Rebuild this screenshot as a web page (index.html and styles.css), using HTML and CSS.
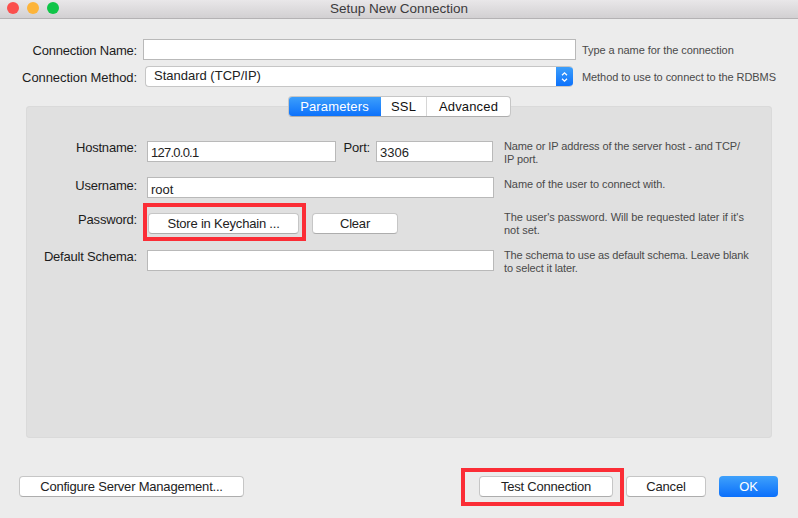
FILE: index.html
```html
<!DOCTYPE html>
<html lang="en">
<head>
    <meta charset="UTF-8">
    <meta name="viewport" content="width=device-width, initial-scale=1.0">
    <title>Setup New Connection</title>
    <link rel="stylesheet" href="styles.css">
</head>
<body>
    <div class="window">
        <div class="titlebar">
            <div class="lights">
                <span class="light red"></span>
                <span class="light yellow"></span>
                <span class="light green"></span>
            </div>
            <div class="title">Setup New Connection</div>
        </div>

        <div class="top-form">
            <div class="top-row">
                <label class="top-label">Connection Name:</label>
                <div class="input name-input"></div>
                <div class="hint">Type a name for the connection</div>
            </div>
            <div class="top-row">
                <label class="top-label method-label">Connection Method:</label>
                <div class="select">
                    <span class="select-text">Standard (TCP/IP)</span>
                    <span class="stepper">
                        <svg width="9" height="14" viewBox="0 0 9 14">
                            <path d="M2 5.2 4.5 2.8 7 5.2M2 8.8 4.5 11.2 7 8.8" fill="none" stroke="#fff" stroke-width="1.3"/>
                        </svg>
                    </span>
                </div>
                <div class="hint">Method to use to connect to the RDBMS</div>
            </div>
        </div>

        <div class="panel-wrap">
            <div class="tabs">
                <div class="tab tab-active">Parameters</div>
                <div class="tab tab-ssl">SSL</div>
                <div class="tab tab-advanced">Advanced</div>
            </div>
            <div class="panel">
                <div class="form-grid">
                    <label class="field-label">Hostname:</label>
                    <div class="field host-field">
                        <div class="input host-input"><span class="host-value">127.0.0.1</span></div>
                        <label class="field-label port-label">Port:</label>
                        <div class="input port-input">3306</div>
                    </div>
                    <div class="hint host-hint">Name or IP address of the server host - and TCP/<br>IP port.</div>

                    <label class="field-label user-label">Username:</label>
                    <div class="field">
                        <div class="input wide-input">root</div>
                    </div>
                    <div class="hint user-hint">Name of the user to connect with.</div>

                    <label class="field-label">Password:</label>
                    <div class="field button-field">
                        <div class="btn store-btn">Store in Keychain ...<span class="callout callout-store"></span></div>
                        <div class="btn clear-btn">Clear</div>
                    </div>
                    <div class="hint password-hint">The user's password. Will be requested later if it's<br>not set.</div>

                    <label class="field-label">Default Schema:</label>
                    <div class="field">
                        <div class="input wide-input"></div>
                    </div>
                    <div class="hint schema-hint">The schema to use as default schema. Leave blank<br>to select it later.</div>
                </div>
            </div>
        </div>

        <div class="footer">
            <div class="btn manage-btn">Configure Server Management...</div>
            <div class="footer-right">
                <div class="btn test-btn">Test Connection<span class="callout callout-test"></span></div>
                <div class="btn cancel-btn">Cancel</div>
                <div class="btn ok-btn">OK</div>
            </div>
        </div>
    </div>
</body>
</html>
```

FILE: styles.css
```css
* {
    box-sizing: border-box;
}
html, body {
    margin: 0;
    height: 100%;
}
body {
    font-family: "Liberation Sans", Arial, sans-serif;
    font-size: 13px;
    letter-spacing: -0.2px;
    color: #222;
    background: #ececec;
    overflow: hidden;
}
.window {
    height: 518px;
    display: flex;
    flex-direction: column;
}
.titlebar {
    height: 19px;
    display: flex;
    align-items: center;
    justify-content: center;
    position: relative;
    background: linear-gradient(#e9e7e9, #d2d0d2);
    border-bottom: 1px solid #b4b2b4;
}
.lights {
    position: absolute;
    left: 7px;
    top: 2px;
    display: flex;
    gap: 8px;
}
.light {
    width: 12px;
    height: 12px;
    border-radius: 50%;
}
.red { background: #fb4f4d; }
.yellow { background: #fdb43a; }
.green { background: #0fc548; }
.title {
    color: #3c3a3c;
    font-size: 13.5px;
    letter-spacing: 0;
    line-height: 17px;
    margin-top: -1px;
}

.top-form {
    padding-top: 20px;
    display: flex;
    flex-direction: column;
    gap: 6px;
}
.top-row {
    display: flex;
    align-items: center;
    height: 21px;
}
.top-label {
    width: 137px;
    padding-top: 2px;
    text-align: right;
    color: #1c1c1c;
}
.method-label {
    letter-spacing: -0.08px;
}
.name-input {
    margin-left: 6px;
    width: 433px;
}
.input {
    height: 21px;
    background: #fff;
    border: 1px solid #b9b9b9;
    padding: 3px 3px 0;
    line-height: 17px;
    letter-spacing: 0;
    color: #222;
}
.hint {
    font-size: 11px;
    line-height: 13px;
    letter-spacing: -0.08px;
    white-space: nowrap;
    color: #4a4a4a;
}
.top-row .hint {
    margin-left: 6px;
    padding-top: 2px;
}
.select {
    margin-left: 8px;
    width: 428px;
    height: 21px;
    display: flex;
    background: #fff;
    border: 1px solid #c6c6c6;
    border-right: 0;
    border-radius: 4px;
    overflow: hidden;
}
.select-text {
    flex: 1;
    padding-left: 8px;
    line-height: 18px;
    letter-spacing: 0;
}
.stepper {
    width: 17px;
    margin: -1px 0;
    display: flex;
    align-items: center;
    justify-content: center;
    background: linear-gradient(#3fa1fb, #0a6ffb);
}
.top-row .select + .hint {
    margin-left: 9px;
}

.panel-wrap {
    position: relative;
    margin: 19px 26px 0;
    height: 332px;
}
.panel {
    height: 100%;
    background: #e0e0e0;
    border-radius: 4px;
    box-shadow: inset 0 0 0 1px #dadada;
    padding-top: 35px;
}
.tabs {
    position: absolute;
    left: 262px;
    top: -10px;
    height: 21px;
    width: 223px;
    display: flex;
    background: #fff;
    border: 1px solid #c6c6c6;
    border-bottom-color: #adadad;
    border-radius: 4px;
    font-size: 13px;
    letter-spacing: 0.15px;
    line-height: 19px;
    text-align: center;
    color: #111;
    overflow: hidden;
}
.tab-active {
    width: 93px;
    margin: -1px 0 -1px -1px;
    padding-top: 1px;
    color: #fff;
    background: linear-gradient(#3fa1fb, #0a6ffb);
}
.tab-ssl {
    width: 46px;
    border-right: 1px solid #d6d6d6;
}
.tab-advanced {
    flex: 1;
}

.form-grid {
    display: grid;
    grid-template-columns: 111px 347px 251px;
    grid-template-rows: 36px 36px 37px 21px;
    column-gap: 10px;
}
.field-label {
    text-align: right;
    color: #1c1c1c;
    line-height: 13px;
}
.user-label {
    padding-top: 2px;
}
.host-field {
    display: flex;
}
.host-input {
    width: 189px;
    padding-top: 2px;
}
.host-value {
    letter-spacing: -0.75px;
}
.port-label {
    margin-left: 7px;
    width: 27px;
}
.port-input {
    margin-left: 6px;
    width: 117px;
    padding-top: 2px;
}
.wide-input {
    width: 347px;
}
.button-field {
    display: flex;
}
.form-grid .hint {
    margin-top: -1px;
}
.form-grid .host-hint {
    letter-spacing: -0.12px;
}
.form-grid .user-hint {
    margin-top: 1px;
}
.form-grid .password-hint {
    margin-top: -2px;
    letter-spacing: -0.03px;
}
.form-grid .schema-hint {
    letter-spacing: -0.14px;
}

.btn {
    height: 21px;
    background: #fff;
    border: 1px solid #c6c6c6;
    border-bottom-color: #adadad;
    border-radius: 4px;
    text-align: center;
    line-height: 20px;
    color: #222;
    position: relative;
}
.store-btn {
    margin-left: 1px;
    width: 151px;
}
.clear-btn {
    margin-left: 13px;
    width: 86px;
}
.callout {
    position: absolute;
    border: 4px solid #fb2d36;
}
.callout-store {
    left: -6px;
    top: -11px;
    width: 163px;
    height: 38px;
}
.callout-test {
    left: -19px;
    top: -9px;
    width: 163px;
    height: 38px;
}

.footer {
    margin-top: 38px;
    padding: 0 20px 0 19px;
    display: flex;
    justify-content: space-between;
}
.manage-btn {
    width: 225px;
}
.footer-right {
    display: flex;
}
.test-btn {
    width: 134px;
}
.cancel-btn {
    margin-left: 13px;
    width: 80px;
}
.ok-btn {
    margin-left: 13px;
    width: 59px;
    color: #fff;
    border: 0;
    line-height: 21px;
    background: linear-gradient(#3fa1fb, #0a6ffb);
}
```
